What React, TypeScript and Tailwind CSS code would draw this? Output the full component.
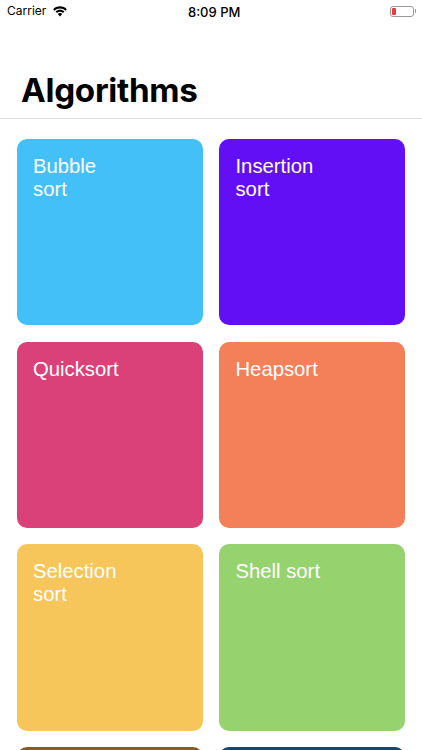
const algorithms = [
  { name: 'Bubble sort', color: 'bg-[#44c0f8]' },
  { name: 'Insertion sort', color: 'bg-[#630ff5]' },
  { name: 'Quicksort', color: 'bg-[#db4179]' },
  { name: 'Heapsort', color: 'bg-[#f4805a]' },
  { name: 'Selection sort', color: 'bg-[#f7c65b]' },
  { name: 'Shell sort', color: 'bg-[#96d36e]' },
  { name: '', color: 'bg-[#8b5a1e]' },
  { name: '', color: 'bg-[#1c4668]' },
];

function WifiIcon() {
  return (
    <svg width="14" height="11" viewBox="0 0 15 11" fill="black">
      <path d="M7.5 0C4.7 0 2.2 1.1.2 3l1.5 1.6C3.2 3.1 5.2 2.2 7.5 2.2s4.3.9 5.8 2.4L14.8 3C12.8 1.1 10.3 0 7.5 0z" />
      <path d="M7.5 3.7c-1.8 0-3.5.7-4.7 1.9l1.5 1.6c.9-.8 2-1.3 3.2-1.3s2.3.5 3.2 1.3l1.5-1.6C11 4.4 9.3 3.7 7.5 3.7z" />
      <path d="M7.5 7.1c-.9 0-1.8.4-2.4 1l2.4 2.8 2.4-2.8c-.6-.6-1.5-1-2.4-1z" />
    </svg>
  );
}

function StatusBar() {
  return (
    <div className="relative flex h-[22px] items-center justify-between pl-[7px] pr-[6px] font-['Inter',sans-serif] text-[13px] text-black">
      <div className="flex items-center gap-[7px]">
        <span className="text-[12px]">Carrier</span>
        <WifiIcon />
      </div>
      <span className="absolute left-[188px] top-[3px] text-[13px] font-medium">8:09 PM</span>
      <div className="flex items-center">
        <div className="flex h-[11px] w-[24px] items-center rounded-[3px] border border-[#9a9a9a] p-[1px]">
          <div className="h-full w-[4px] rounded-[1px] bg-[#f0393c]" />
        </div>
        <div className="ml-[1px] h-[4px] w-[1px] bg-[#a0a0a0]" />
      </div>
    </div>
  );
}

export default function App() {
  return (
    <div className="h-[750px] w-[422px] overflow-hidden bg-white">
      <StatusBar />
      <div className="h-[97px] border-b border-[#dedede] pl-[21px] pt-[49px]">
        <h1 className="font-['Inter',sans-serif] text-[33.2px] font-bold leading-[38px] tracking-[-0.3px] text-black">Algorithms</h1>
      </div>
      <div className="grid grid-cols-[186.3px_186.3px] gap-x-[16.2px] gap-y-[16.3px] pl-[16.6px] pt-[20.2px]">
        {algorithms.map((item) => (
          <div key={item.color} className={`h-[186.3px] rounded-[10px] pl-[16.4px] pr-[80px] pt-[16px] ${item.color}`}>
            <p className="font-['Liberation_Sans',sans-serif] text-[20.3px] leading-[23px] text-white">{item.name}</p>
          </div>
        ))}
      </div>
    </div>
  );
}
